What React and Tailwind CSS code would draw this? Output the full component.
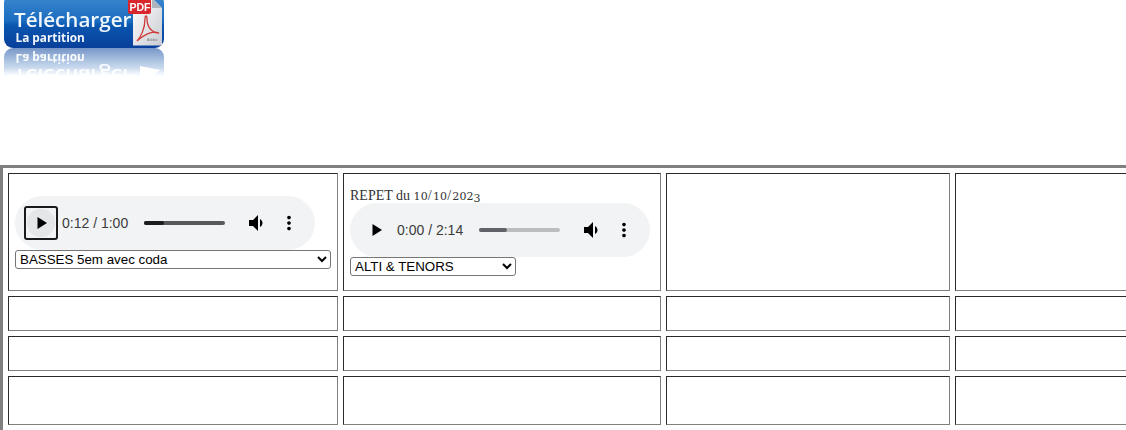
import React from "react";

function Logo() {
  const body = (
    <>
      <rect x="4" y="-6" width="160" height="54" rx="9" fill="url(#blue)" />
      <text x="14" y="27" fontFamily="'Open Sans', sans-serif" fontWeight="600" fontSize="20.6" fill="#f2f7fc">Télécharger</text>
      <text x="15.5" y="42" fontFamily="'Open Sans', sans-serif" fontWeight="700" fontSize="11.800" fill="#f2f7fc">La partition</text>
    </>
  );
  return (
    <svg width="170" height="80" viewBox="0 0 170 80" className="block blur-[0.4px]">
      <defs>
        <linearGradient id="blue" x1="0" y1="0" x2="0" y2="1">
          <stop offset="0" stopColor="#3f8ad0" />
          <stop offset="0.5" stopColor="#1a6cc0" />
          <stop offset="0.58" stopColor="#0a56b0" />
          <stop offset="1" stopColor="#083f9a" />
        </linearGradient>
        <linearGradient id="fade" x1="0" y1="48" x2="0" y2="76" gradientUnits="userSpaceOnUse">
          <stop offset="0" stopColor="#fff" stopOpacity="0.55" />
          <stop offset="0.7" stopColor="#fff" stopOpacity="0.22" />
          <stop offset="1" stopColor="#fff" stopOpacity="0" />
        </linearGradient>
        <mask id="m">
          <rect x="0" y="48" width="170" height="28" fill="url(#fade)" />
        </mask>
        <linearGradient id="paper" x1="0" y1="0" x2="1" y2="1">
          <stop offset="0" stopColor="#ffffff" />
          <stop offset="1" stopColor="#c9cdd2" />
        </linearGradient>
      </defs>
      <g mask="url(#m)">
        <g transform="translate(0 96) scale(1 -1)">
          {body}
          <path d="M140 8L160 26L140 30Z" fill="#ffffff" />
        </g>
      </g>
      {body}
      <path d="M133 -2H152L162 8V45.5H133Z" fill="url(#paper)" />
      <path d="M152 -2V8H162Z" fill="#aeb4bb" />
      <rect x="128" y="-1" width="23" height="15" rx="2" fill="#d8262c" />
      <text x="129.500" y="11" fontFamily="'Liberation Sans', sans-serif" fontWeight="700" fontSize="10.500" fill="#ffffff">PDF</text>
      <path d="M137 41C141 37 145 28 145 19C145 15 147 15 147 19C147 27 152 33 159 33C155 31 147 32 137 41Z" fill="none" stroke="#cf3a38" strokeWidth="1.3" />
      <text x="147" y="41" fontFamily="'Liberation Sans', sans-serif" fontSize="3.600" fill="#777">Adobe</text>
    </svg>
  );
}

function Player({ time, filled, fillColor, trackColor, focused }) {
  return (
    <div className="flex h-[54px] w-[300px] items-center rounded-[27px] bg-[#f1f3f4] pl-[9px]">
      <div className={`relative flex h-[34px] w-[34px] shrink-0 items-center justify-center rounded-[3px] ${focused ? "border-2 border-[#1a1a1a]" : ""}`}>
        {focused && <div className="absolute h-[28px] w-[28px] rounded-full bg-[#e4e6e7]" />}
        <svg width="24" height="24" viewBox="0 0 24 24" className="relative ml-[2px] shrink-0">
          <path d="M7.500 6v12l9.500-6z" fill="#000" />
        </svg>
      </div>
      <div className="ml-[4px] w-[82px] shrink-0 font-['Liberation_Sans',sans-serif] text-[14px] leading-none text-[#3c3c3c]">{time}</div>
      <div className="h-[4px] w-[81px] shrink-0 rounded-full" style={{ backgroundColor: trackColor }}>
        <div className="h-full rounded-full" style={{ width: filled, backgroundColor: fillColor }} />
      </div>
      <svg width="24" height="24" viewBox="0 0 24 24" className="ml-[21px] shrink-0">
        <path d="M3 9v6h4l5 5V4L7 9H3zm13.500 3c0-1.770-1.020-3.290-2.500-4.030v8.050c1.480-.73 2.500-2.250 2.500-4.020z" fill="#000" />
      </svg>
      <svg width="22" height="22" viewBox="0 0 24 24" className="ml-[8px] shrink-0">
        <path d="M12 8c1.100 0 2-.9 2-2s-.9-2-2-2-2 .9-2 2 .9 2 2 2zm0 2c-1.100 0-2 .9-2 2s.9 2 2 2 2-.9 2-2-.9-2-2-2zm0 6c-1.100 0-2 .9-2 2s.9 2 2 2 2-.9 2-2-.9-2-2-2z" fill="#000" />
      </svg>
    </div>
  );
}

function D({ children }) {
  return <span className="font-['DejaVu_Serif',serif] text-[11px] tracking-[0.1px]">{children}</span>;
}

function S() {
  return <span className="pr-[1.300px]">/</span>;
}

const cell = "border border-t-[#2b2b2b] border-l-[#2b2b2b] border-r-[#808080] border-b-[#808080] p-[6px] align-middle";
const selectCls = "block h-[19px] rounded-[3px] border border-[#767676] bg-white font-['Liberation_Sans',sans-serif] text-[13.333px] text-black";

export default function App() {
  return (
    <div className="h-[430px] w-[1126px] overflow-hidden bg-white">
      <div className="h-[165px]">
        <Logo />
      </div>
      <table className="w-[1280px] table-fixed border-separate border-spacing-[5px] border-t-[3px] border-l-[3px] border-[#808080]">
        <colgroup>
          <col className="w-[330px]" />
          <col className="w-[318px]" />
          <col className="w-[284px]" />
          <col className="w-[328px]" />
        </colgroup>
        <tbody>
          <tr className="h-[118px]">
            <td className={cell}>
              <Player time="0:12 / 1:00" filled="25%" fillColor="#1c1c1c" trackColor="#595959" focused />
              <select className={`${selectCls} w-[316px]`} defaultValue="a">
                <option value="a">BASSES 5em avec coda</option>
              </select>
            </td>
            <td className={cell}>
              <div className="h-[15px] whitespace-nowrap font-['Liberation_Serif',serif] text-[14px] leading-[15px] text-[#333]">
                REPET du <D>10</D><S /><D>10</D><S /><D>202</D><span className="inline-block translate-y-[2px] font-['DejaVu_Serif',serif] text-[11px]">3</span>
              </div>
              <Player time="0:00 / 2:14" filled="34%" fillColor="#5f6368" trackColor="#bcbdbe" />
              <select className={`${selectCls} w-[166px]`} defaultValue="a">
                <option value="a">ALTI &amp; TENORS</option>
              </select>
            </td>
            <td className={cell}></td>
            <td className={cell}></td>
          </tr>
          {["h-[35px]", "h-[35px]", "h-[49px]"].map((h, i) => (
            <tr key={i} className={h}>
              <td className={cell}></td>
              <td className={cell}></td>
              <td className={cell}></td>
              <td className={cell}></td>
            </tr>
          ))}
        </tbody>
      </table>
    </div>
  );
}
